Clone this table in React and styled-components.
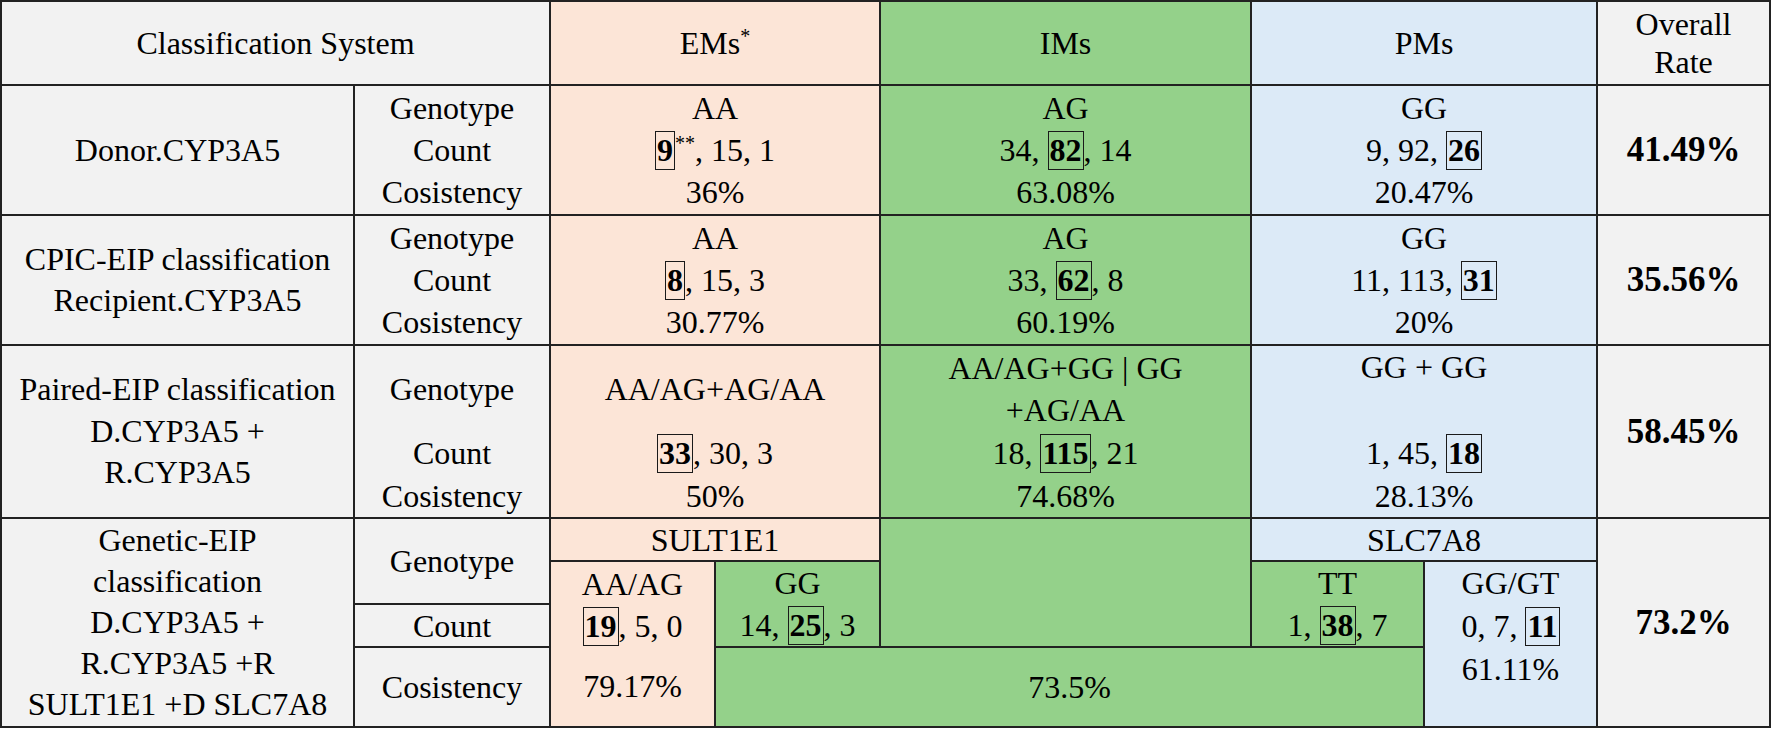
import React from 'react';
import styled, { createGlobalStyle } from 'styled-components';

const Global = createGlobalStyle`
  html, body { margin: 0; padding: 0; background: #ffffff; }
  body { font-family: "Liberation Serif", "Times New Roman", serif; }
`;

const tones = {
  gray: '#f2f2f2',
  peach: '#fce5d7',
  green: '#94d18a',
  blue: '#dceaf7',
};

const Table = styled.div`
  display: grid;
  width: max-content;
  grid-template-columns: 351px 194px 163px 163px 369px 171px 171px 171px;
  grid-template-rows: 82px 128px 128px 171px 41px 41px 41px 78px;
  gap: 2px;
  padding: 2px;
  background: #222222;
  font-family: "Liberation Serif", "Times New Roman", serif;
  font-size: 32px;
  color: #000000;
`;

const Cell = styled.div`
  grid-column: ${(p) => p.$col};
  grid-row: ${(p) => p.$row};
  background: ${(p) => tones[p.$tone || 'gray']};
  display: flex;
  flex-direction: column;
  justify-content: ${(p) => (p.$top ? 'flex-start' : 'center')};
  align-items: center;
  text-align: center;
  white-space: nowrap;
  line-height: ${(p) => p.$lh || 42}px;
  overflow: hidden;
`;

const SplitCell = styled.div`
  grid-column: ${(p) => p.$col};
  grid-row: ${(p) => p.$row};
  background: ${(p) => tones[p.$tone || 'gray']};
  display: grid;
  grid-template-rows: ${(p) => p.$rows};
  text-align: center;
  white-space: nowrap;
  line-height: ${(p) => p.$lh || 42}px;
`;

const Block = styled.div`
  display: flex;
  flex-direction: column;
  justify-content: ${(p) => (p.$top ? 'flex-start' : 'center')};
  align-items: center;
`;

const Line = styled.span`
  display: block;
`;

const Rate = styled.span`
  display: block;
  font-weight: 700;
  font-size: 35px;
`;

const Boxed = styled.span`
  display: inline-block;
  font-weight: 700;
  border: 1.5px solid #1a1a1a;
  padding: 0 1px;
  line-height: 37px;
`;

const Sup = styled.sup`
  font-size: 20px;
  line-height: 0;
  vertical-align: 11px;
`;

const Labels = ({ col, row }) => (
  <Cell $col={col} $row={row}>
    <Line>Genotype</Line>
    <Line>Count</Line>
    <Line>Cosistency</Line>
  </Cell>
);

export default function App() {
  return (
    <>
      <Global />
      <Table>
        {/* Header */}
        <Cell $col="1 / 3" $row="1">
          <Line>Classification System</Line>
        </Cell>
        <Cell $col="3 / 5" $row="1" $tone="peach">
          <Line>
            EMs<Sup>*</Sup>
          </Line>
        </Cell>
        <Cell $col="5 / 6" $row="1" $tone="green">
          <Line>IMs</Line>
        </Cell>
        <Cell $col="6 / 8" $row="1" $tone="blue">
          <Line>PMs</Line>
        </Cell>
        <Cell $col="8 / 9" $row="1" $lh={38}>
          <Line>Overall</Line>
          <Line>Rate</Line>
        </Cell>

        {/* Donor.CYP3A5 */}
        <Cell $col="1 / 2" $row="2" $lh={41}>
          <Line>Donor.CYP3A5</Line>
        </Cell>
        <Labels col="2 / 3" row="2" />
        <Cell $col="3 / 5" $row="2" $tone="peach">
          <Line>AA</Line>
          <Line>
            <Boxed>9</Boxed>
            <Sup>**</Sup>, 15, 1
          </Line>
          <Line>36%</Line>
        </Cell>
        <Cell $col="5 / 6" $row="2" $tone="green">
          <Line>AG</Line>
          <Line>
            34, <Boxed>82</Boxed>, 14
          </Line>
          <Line>63.08%</Line>
        </Cell>
        <Cell $col="6 / 8" $row="2" $tone="blue">
          <Line>GG</Line>
          <Line>
            9, 92, <Boxed>26</Boxed>
          </Line>
          <Line>20.47%</Line>
        </Cell>
        <Cell $col="8 / 9" $row="2">
          <Rate>41.49%</Rate>
        </Cell>

        {/* CPIC-EIP */}
        <Cell $col="1 / 2" $row="3" $lh={41}>
          <Line>CPIC-EIP classification</Line>
          <Line>Recipient.CYP3A5</Line>
        </Cell>
        <Labels col="2 / 3" row="3" />
        <Cell $col="3 / 5" $row="3" $tone="peach">
          <Line>AA</Line>
          <Line>
            <Boxed>8</Boxed>, 15, 3
          </Line>
          <Line>30.77%</Line>
        </Cell>
        <Cell $col="5 / 6" $row="3" $tone="green">
          <Line>AG</Line>
          <Line>
            33, <Boxed>62</Boxed>, 8
          </Line>
          <Line>60.19%</Line>
        </Cell>
        <Cell $col="6 / 8" $row="3" $tone="blue">
          <Line>GG</Line>
          <Line>
            11, 113, <Boxed>31</Boxed>
          </Line>
          <Line>20%</Line>
        </Cell>
        <Cell $col="8 / 9" $row="3">
          <Rate>35.56%</Rate>
        </Cell>

        {/* Paired-EIP */}
        <Cell $col="1 / 2" $row="4" $lh={41.5}>
          <Line>Paired-EIP classification</Line>
          <Line>D.CYP3A5 +</Line>
          <Line>R.CYP3A5</Line>
        </Cell>
        <SplitCell $col="2 / 3" $row="4" $rows="2fr 1fr 1fr">
          <Block>Genotype</Block>
          <Block>Count</Block>
          <Block>Cosistency</Block>
        </SplitCell>
        <SplitCell $col="3 / 5" $row="4" $tone="peach" $rows="2fr 1fr 1fr">
          <Block>AA/AG+AG/AA</Block>
          <Block>
            <Line>
              <Boxed>33</Boxed>, 30, 3
            </Line>
          </Block>
          <Block>50%</Block>
        </SplitCell>
        <SplitCell $col="5 / 6" $row="4" $tone="green" $rows="2fr 1fr 1fr">
          <Block>
            <Line>AA/AG+GG | GG</Line>
            <Line>+AG/AA</Line>
          </Block>
          <Block>
            <Line>
              18, <Boxed>115</Boxed>, 21
            </Line>
          </Block>
          <Block>74.68%</Block>
        </SplitCell>
        <SplitCell $col="6 / 8" $row="4" $tone="blue" $rows="2fr 1fr 1fr">
          <Block $top>
            <Line>GG + GG</Line>
          </Block>
          <Block>
            <Line>
              1, 45, <Boxed>18</Boxed>
            </Line>
          </Block>
          <Block>28.13%</Block>
        </SplitCell>
        <Cell $col="8 / 9" $row="4">
          <Rate>58.45%</Rate>
        </Cell>

        {/* Genetic-EIP */}
        <Cell $col="1 / 2" $row="5 / 9" $lh={41}>
          <Line>Genetic-EIP</Line>
          <Line>classification</Line>
          <Line>D.CYP3A5 +</Line>
          <Line>R.CYP3A5 +R</Line>
          <Line>SULT1E1 +D SLC7A8</Line>
        </Cell>
        <Cell $col="2 / 3" $row="5 / 7">
          <Line>Genotype</Line>
        </Cell>
        <Cell $col="2 / 3" $row="7 / 8">
          <Line>Count</Line>
        </Cell>
        <Cell $col="2 / 3" $row="8 / 9">
          <Line>Cosistency</Line>
        </Cell>

        <Cell $col="3 / 5" $row="5 / 6" $tone="peach">
          <Line>SULT1E1</Line>
        </Cell>
        <SplitCell $col="3 / 4" $row="6 / 9" $tone="peach" $rows="43px 41px 1fr">
          <Block>AA/AG</Block>
          <Block>
            <Line>
              <Boxed>19</Boxed>, 5, 0
            </Line>
          </Block>
          <Block>79.17%</Block>
        </SplitCell>
        <Cell $col="4 / 5" $row="6 / 8" $tone="green">
          <Line>GG</Line>
          <Line>
            14, <Boxed>25</Boxed>, 3
          </Line>
        </Cell>
        <Cell $col="5 / 6" $row="5 / 8" $tone="green" />
        <Cell $col="4 / 7" $row="8 / 9" $tone="green">
          <Line>73.5%</Line>
        </Cell>

        <Cell $col="6 / 8" $row="5 / 6" $tone="blue">
          <Line>SLC7A8</Line>
        </Cell>
        <Cell $col="6 / 7" $row="6 / 8" $tone="green">
          <Line>TT</Line>
          <Line>
            1, <Boxed>38</Boxed>, 7
          </Line>
        </Cell>
        <Cell $col="7 / 8" $row="6 / 9" $tone="blue" $top $lh={43}>
          <Line>GG/GT</Line>
          <Line>
            0, 7, <Boxed>11</Boxed>
          </Line>
          <Line>61.11%</Line>
        </Cell>
        <Cell $col="8 / 9" $row="5 / 9">
          <Rate>73.2%</Rate>
        </Cell>
      </Table>
    </>
  );
}
